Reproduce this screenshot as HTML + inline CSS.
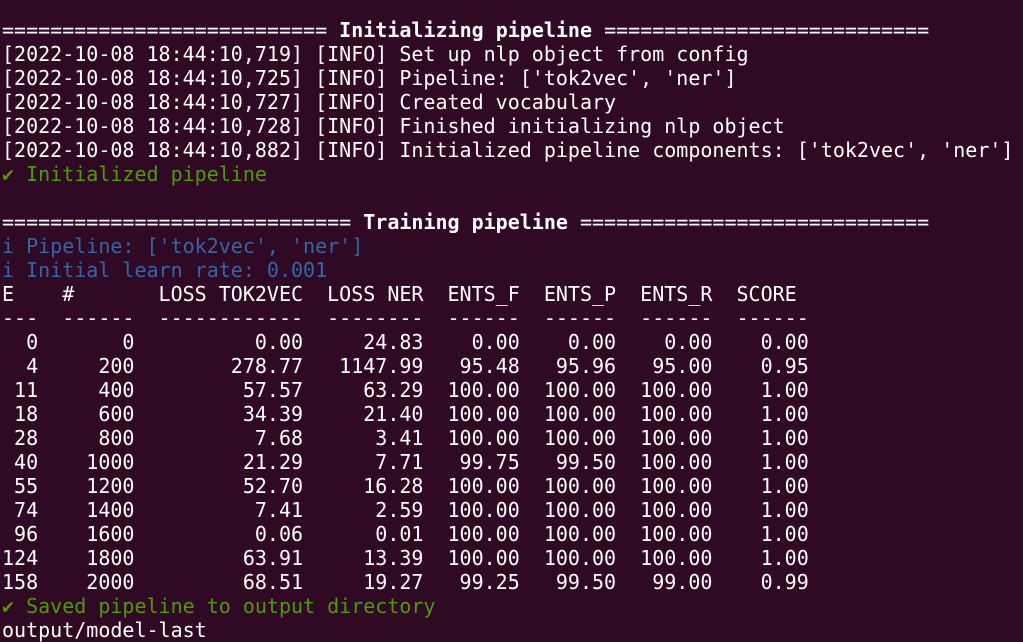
<!DOCTYPE html>
<html><head><meta charset="utf-8"><style>
html,body{margin:0;padding:0;background:#300a24;width:1023px;height:640px;overflow:hidden}
pre{margin:0;position:absolute;left:2px;top:18px;font-family:"DejaVu Sans Mono","Liberation Mono",monospace;font-size:20px;line-height:24px;color:#ffffff;letter-spacing:0}
b{font-weight:bold}
.g{color:#4e9a06}.bl{color:#3465a4}
</style></head><body><pre>=========================== <b>Initializing pipeline</b> ===========================
[2022-10-08 18:44:10,719] [INFO] Set up nlp object from config
[2022-10-08 18:44:10,725] [INFO] Pipeline: ['tok2vec', 'ner']
[2022-10-08 18:44:10,727] [INFO] Created vocabulary
[2022-10-08 18:44:10,728] [INFO] Finished initializing nlp object
[2022-10-08 18:44:10,882] [INFO] Initialized pipeline components: ['tok2vec', 'ner']
<span class="g">✔ Initialized pipeline</span>

============================= <b>Training pipeline</b> =============================
<span class="bl">i Pipeline: ['tok2vec', 'ner']</span>
<span class="bl">i Initial learn rate: 0.001</span>
E    #       LOSS TOK2VEC  LOSS NER  ENTS_F  ENTS_P  ENTS_R  SCORE 
---  ------  ------------  --------  ------  ------  ------  ------
  0       0          0.00     24.83    0.00    0.00    0.00    0.00
  4     200        278.77   1147.99   95.48   95.96   95.00    0.95
 11     400         57.57     63.29  100.00  100.00  100.00    1.00
 18     600         34.39     21.40  100.00  100.00  100.00    1.00
 28     800          7.68      3.41  100.00  100.00  100.00    1.00
 40    1000         21.29      7.71   99.75   99.50  100.00    1.00
 55    1200         52.70     16.28  100.00  100.00  100.00    1.00
 74    1400          7.41      2.59  100.00  100.00  100.00    1.00
 96    1600          0.06      0.01  100.00  100.00  100.00    1.00
124    1800         63.91     13.39  100.00  100.00  100.00    1.00
158    2000         68.51     19.27   99.25   99.50   99.00    0.99
<span class="g">✔ Saved pipeline to output directory</span>
output/model-last</pre></body></html>
